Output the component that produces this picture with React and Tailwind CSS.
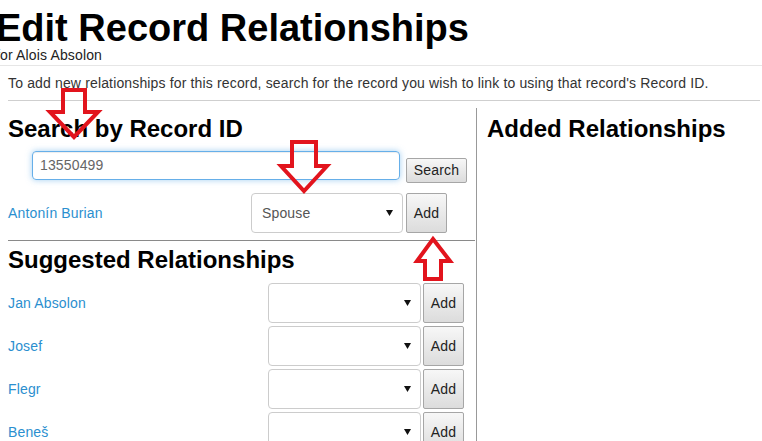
import React from 'react';

const font = "font-['Liberation_Sans',Arial,Helvetica,sans-serif]";

const Caret = () => (
  <svg width="7" height="6" viewBox="0 0 7 6" className="shrink-0">
    <path d="M0 0 H7 L3.5 6 Z" fill="#111" />
  </svg>
);

const FakeSelect = ({ value, className }) => (
  <div className={`flex items-center justify-between h-[40px] bg-white border border-[#ccc] rounded-[4px] pl-[10px] pr-[9px] text-[#555] ${className}`}>
    <span>{value}</span>
    <Caret />
  </div>
);

const Btn = ({ children, className }) => (
  <button className={`flex items-center justify-center border border-[#a6a6a6] rounded-[2px] bg-gradient-to-b from-[#f7f7f7] to-[#dcdcdc] text-[#222] ${className}`}>
    {children}
  </button>
);

const suggestions = ['Jan Absolon', 'Josef', 'Flegr', 'Beneš'];

// red hand-drawn annotation arrows over the page
const Arrows = () => (
  <svg className="absolute inset-0 pointer-events-none" width="762" height="441" viewBox="0 0 762 441">
    <g fill="none" stroke="#e2141d" strokeWidth="4" strokeLinejoin="miter">
      <polygon points="63,90 85,90 85,112 98,112 74,137 50,112 63,112" />
      <polygon points="292,142 316,142 316,166 327,166 304,191 281,166 292,166" />
      <polygon points="433,239 450,261 441,261 441,279 425,279 425,261 417,261" />
    </g>
  </svg>
);

export default function App() {
  return (
    <div className={`relative w-[762px] h-[441px] overflow-hidden bg-white text-[14px] tracking-[0.15px] text-[#333] ${font}`}>
      {/* header */}
      <div className="-ml-[4px]">
        <h1 className="pt-[10px] text-[38px] leading-[37px] font-bold tracking-normal text-black whitespace-nowrap">Edit Record Relationships</h1>
        <p className="mt-[1px] text-[14px] leading-[14px] text-[#222]">for Alois Absolon</p>
      </div>
      <div className="mt-[3px] border-t border-[#e6e6e6]" />

      <div className="ml-[8px] mr-[2px]">
        <p className="mt-[7px] leading-[20px] whitespace-nowrap">
          To add new relationships for this record, search for the record you wish to link to using that record's Record ID.
        </p>
        <div className="mt-[7px] border-t border-[#cfcfcf]" />

        <div className="flex">
          {/* left column */}
          <div className="w-[469px] mt-[7px] border-r border-[#999] h-[400px]">
            <h3 className="pt-[8px] text-[24px] leading-[26px] font-bold tracking-normal text-black">Search by Record ID</h3>

            <div className="flex items-start mt-[9px]">
              <div className="ml-[24px] w-[368px] h-[29px] flex items-center pl-[7px] border border-[#66afe9] rounded-[4px] text-[#666] shadow-[inset_0_1px_1px_rgba(0,0,0,0.075),0_0_6px_rgba(102,175,233,0.6)]">
                13550499
              </div>
              <Btn className="ml-[6px] mt-[7px] w-[61px] h-[25px]">Search</Btn>
            </div>

            <div className="flex items-center mt-[10px] pr-[29px]">
              <a className="flex-1 text-[#2b8fcf]">Antonín Burian</a>
              <FakeSelect value="Spouse" className="w-[152px]" />
              <Btn className="ml-[3px] w-[41px] h-[40px]">Add</Btn>
            </div>

            <div className="mt-[7px] border-t border-[#8a8a8a] mr-[1px]" />

            <h3 className="mt-[6px] text-[24px] leading-[26px] font-bold tracking-normal text-black">Suggested Relationships</h3>

            <div className="mt-[10px] flex flex-col gap-[3px]">
              {suggestions.map((name) => (
                <div key={name} className="flex items-center pr-[12px]">
                  <a className="flex-1 text-[#2b8fcf]">{name}</a>
                  <FakeSelect value="" className="w-[153px]" />
                  <Btn className="ml-[2px] w-[41px] h-[40px]">Add</Btn>
                </div>
              ))}
            </div>
          </div>

          {/* right column */}
          <div className="flex-1 pl-[10px] mt-[7px]">
            <h3 className="pt-[8px] text-[24px] leading-[26px] font-bold tracking-normal text-black">Added Relationships</h3>
          </div>
        </div>
      </div>

      <Arrows />
    </div>
  );
}
